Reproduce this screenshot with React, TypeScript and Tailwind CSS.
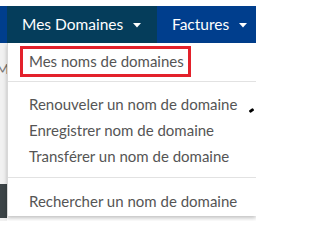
import React from 'react';

const items = [
  'Renouveler un nom de domaine',
  'Enregistrer nom de domaine',
  'Transférer un nom de domaine',
];

function Caret() {
  return (
    <svg width="8" height="5" viewBox="0 0 8 5" className="ml-[10px] mt-[2px]">
      <path d="M0 0h8L4 4.5z" fill="currentColor" />
    </svg>
  );
}

export default function App() {
  return (
    <div
      className="w-[256px] h-[221px] overflow-hidden bg-white flex flex-col relative"
      style={{ fontFamily: 'Lato, "Open Sans", sans-serif' }}
    >
      <div className="h-[6px] shrink-0 bg-white" />

      {/* top nav */}
      <div className="h-[37px] shrink-0 flex bg-[#003e8d] text-white text-[15.5px]">
        <div className="w-[7px]" />
        <div className="w-[150px] bg-[#053d5b] flex items-center pl-[15px]">
          Mes Domaines
          <Caret />
        </div>
        <div className="flex items-center pl-[15px] whitespace-nowrap">
          Factures
          <Caret />
        </div>
      </div>

      <div className="flex flex-1 min-h-0">
        {/* page behind the menu */}
        <div className="w-[7px] shrink-0 bg-[#f1f1f1] flex flex-col overflow-hidden">
          <div className="h-[19px]" />
          <div className="text-[14px] text-[#777] -ml-[4px] leading-none">M</div>
          <div className="flex-1" />
          <div className="h-[34px] bg-[#3c4447] mb-[3px]" />
        </div>

        {/* dropdown */}
        <div className="flex-1 bg-white border-l border-[#d8d8d8] shadow-[0_2px_4px_rgba(0,0,0,0.25)] self-start w-full text-[15px] text-[#555]">
          <div className="pt-[3px] pl-[12px]">
            <div className="w-[171px] h-[31px] border-[3px] border-[#e3212b] flex items-center pl-[6px] whitespace-nowrap">
              Mes noms de domaines
            </div>
          </div>
          <div className="mt-[4px] h-px bg-[#e2e2e2]" />
          <div className="pt-[9px] pb-[8px]">
            {items.map((label) => (
              <div key={label} className="h-[26px] flex items-center pl-[21px] whitespace-nowrap relative">
                {label}
              </div>
            ))}
          </div>
          <div className="h-px bg-[#e2e2e2]" />
          <div className="pt-[10px] pb-[2px]">
            <div className="h-[26px] flex items-center pl-[21px] whitespace-nowrap">
              Rechercher un nom de domaine
            </div>
          </div>
        </div>
      </div>

      {/* bit of cursor at the right */}
      <div className="absolute left-[249px] top-[109px] w-[5px] h-[3px] bg-black rounded-[1px] -rotate-[35deg]" />
    </div>
  );
}
